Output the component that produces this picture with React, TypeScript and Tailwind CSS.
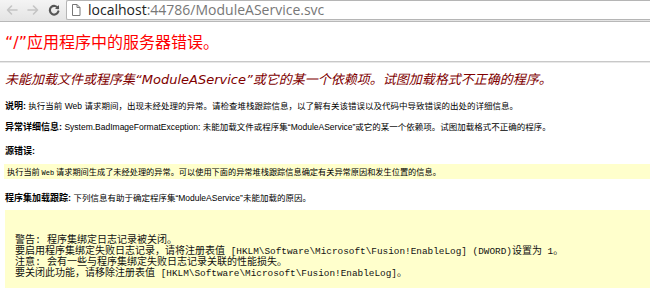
import React from "react";

function Mono({ children }: { children: React.ReactNode }) {
  return <span className="text-[9.4px]">{children}</span>;
}

export default function App() {
  return (
    <div className="w-[650px] h-[298px] overflow-hidden bg-white font-['Liberation_Sans','Noto_Sans_CJK_SC',sans-serif]">
      {/* toolbar */}
      <div className="h-[22px] flex items-start bg-gradient-to-b from-[#f4f4f4] to-[#e4e4e4] border-b border-[#b8b8b8]">
        <div className="w-[66px] h-[20px] flex items-center pl-[6px] gap-[9px]">
          <svg width="12" height="12" viewBox="0 0 12 12" fill="none" stroke="#c4c4c4" strokeWidth="1.6" strokeLinecap="round" strokeLinejoin="round">
            <path d="M11 6H1.5M5.5 2L1.5 6l4 4" />
          </svg>
          <svg width="12" height="12" viewBox="0 0 12 12" fill="none" stroke="#c4c4c4" strokeWidth="1.6" strokeLinecap="round" strokeLinejoin="round">
            <path d="M1 6h9.5M6.5 2l4 4-4 4" />
          </svg>
          <svg width="12" height="12" viewBox="0 0 12 12" fill="none" stroke="#555" strokeWidth="2.2" strokeLinecap="round">
            <path d="M10 4.2A4.3 4.3 0 1 0 10.3 7.5" />
            <path d="M11 1v4H7z" fill="#555" stroke="none" />
          </svg>
        </div>
        <div className="flex-1 h-[20px] bg-white border border-[#b5b5b5] border-r-0 rounded-l-[2px] flex items-center pl-[4px]">
          <svg width="10" height="12" viewBox="0 0 10 12" fill="white" stroke="#777" strokeWidth="1">
            <path d="M1.5 0.5h4.5l3 3v8H1.5z" />
            <path d="M6 0.5v3h3" fill="none" />
          </svg>
          <span className="ml-[7px] text-[14px] leading-none font-['Open_Sans','Liberation_Sans',sans-serif]">
            <span className="text-[#222]">localhost</span>
            <span className="text-[#777]">:44786/ModuleAService.svc</span>
          </span>
        </div>
      </div>

      <div className="px-[5px]">
        <div className="pt-[11px] text-[16px] leading-[20px] text-[#ff0000] font-['DejaVu_Sans','Noto_Sans_CJK_SC',sans-serif]">
          “/”应用程序中的服务器错误。
        </div>
        <div className="mt-[8px] h-[2px] border-t border-[#c8c8c8] border-b border-b-[#e8e8e8] -mx-[5px]" />
        <div className="mt-[8px] text-[13px] leading-[18px] italic text-[#800000] font-['DejaVu_Sans','Noto_Sans_CJK_SC',sans-serif]">
          未能加载文件或程序集“ModuleAService”或它的某一个依赖项。试图加载格式不正确的程序。
        </div>

        <div className="mt-[11px] text-[8.5px] leading-[12px] text-black">
          <span className="font-bold text-[9px]">说明:</span> 执行当前 Web
          请求期间，出现未经处理的异常。请检查堆栈跟踪信息，以了解有关该错误以及代码中导致错误的出处的详细信息。
        </div>

        <div className="mt-[9px] text-[8.5px] leading-[12px] text-black">
          <span className="font-bold text-[9px]">异常详细信息:</span>{" "}
          System.BadImageFormatException: 未能加载文件或程序集“ModuleAService”或它的某一个依赖项。试图加载格式不正确的程序。
        </div>

        <div className="mt-[12px] text-[9px] leading-[12px] font-bold text-black">源错误:</div>

        <div className="mt-[7px] -mr-[5px] -ml-[1px] bg-[#ffffcc] h-[15px] pl-[3px] text-[8.2px] leading-[15px] text-black font-['Noto_Sans_CJK_SC',sans-serif]">
          执行当前 <span className="text-[7px] font-['Liberation_Mono',monospace]">Web</span>{" "}
          请求期间生成了未经处理的异常。可以使用下面的异常堆栈跟踪信息确定有关异常原因和发生位置的信息。
        </div>

        <div className="mt-[13px] text-[8.5px] leading-[12px] text-black">
          <span className="font-bold text-[9px]">程序集加载跟踪:</span>{" "}
          下列信息有助于确定程序集“ModuleAService”未能加载的原因。
        </div>

        <div className="mt-[6px] -mr-[5px] bg-[#ffffcc] h-[78px] pl-[10px] pt-[25px] text-[10px] leading-[11px] text-[#111] whitespace-pre font-['Liberation_Mono','Noto_Sans_CJK_SC',monospace]">
          <div>警告: 程序集绑定日志记录被关闭。</div>
          <div>
            要启用程序集绑定失败日志记录，请将注册表值<Mono> [HKLM\Software\Microsoft\Fusion!EnableLog] (DWORD)</Mono>设置为<Mono> 1</Mono>。
          </div>
          <div>注意: 会有一些与程序集绑定失败日志记录关联的性能损失。</div>
          <div>
            要关闭此功能，请移除注册表值<Mono> [HKLM\Software\Microsoft\Fusion!EnableLog]</Mono>。
          </div>
        </div>
      </div>
    </div>
  );
}
